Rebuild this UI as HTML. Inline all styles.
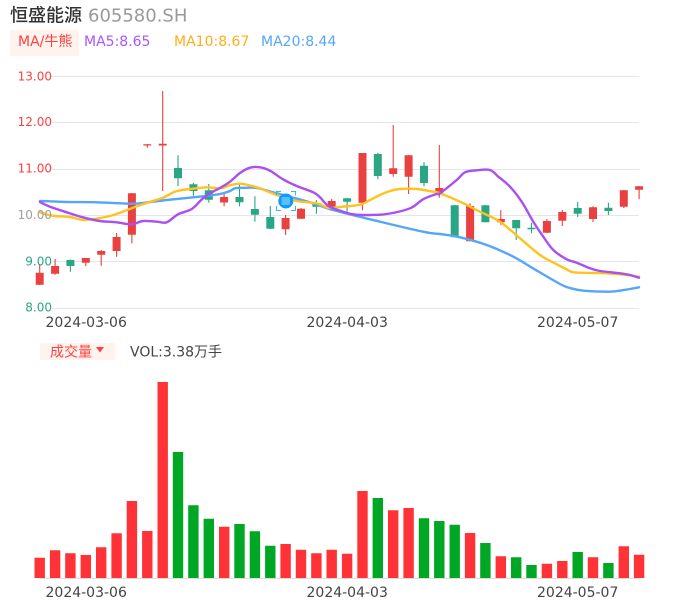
<!DOCTYPE html>
<html>
<head>
<meta charset="utf-8">
<style>
html,body{margin:0;padding:0;background:#fff;width:686px;height:606px;overflow:hidden}
svg{display:block}
text{font-family:"DejaVu Sans","Noto Sans CJK SC",sans-serif}
</style>
</head>
<body>
<svg width="686" height="606" viewBox="0 0 686 606" xmlns="http://www.w3.org/2000/svg">
<rect width="686" height="606" fill="#fff"/>
<text x="10" y="21.500" font-size="18" fill="#333" font-weight="500">恒盛能源</text>
<text x="88" y="21.500" font-size="18" fill="#999">605580.SH</text>
<rect x="10" y="30" width="69" height="26" fill="#FFF3EE"/>
<text x="18" y="46" font-size="14" fill="#FF4040">MA/牛熊</text>
<text x="84" y="46" font-size="14" fill="#AA55FF">MA5:8.65</text>
<text x="174" y="46" font-size="14" fill="#FFAE1A">MA10:8.67</text>
<text x="261" y="46" font-size="14" fill="#55A8F5">MA20:8.44</text>

<path d="M52 76.500H639M52 122.500H639M52 169.500H639M52 215.500H639M52 261.500H639M52 308.500H639" stroke="#E2E5F1" stroke-width="1" fill="none"/>

<path stroke="#E94040" stroke-width="1.100" fill="none" d="M39.700 264V285M55.100 259V274.700M85.800 258V266M101.200 250V265.700M116.600 233V256.700M131.900 193V243.300M147.300 144V147.700M162.700 91V191M224.100 194V206.300M285.600 215V235M301 208V219M331.700 199V209M362.500 153V210.300M393.200 125V176.700M408.600 155V194M439.300 145V197.700M470.100 203.300V241.300M500.800 210V224.700M546.900 219V233M562.300 210V226M593 206.300V222M623.800 190V208M639.100 186V199.300"/>
<path stroke="#2BA685" stroke-width="1.100" fill="none" d="M70.400 259.500V271.700M178 155.300V186M193.400 182.700V195.700M208.800 184V202.700M239.500 183V206.300M254.900 196.300V221.700M270.300 206V229M316.400 200V213.700M347.100 198V211.700M377.800 153V179.300M424 162V186.300M454.700 205V237.300M485.400 205V222.300M516.200 220V240M531.500 222.700V233.300M577.700 202V217M608.400 202.700V215"/>
<path fill="#EB4040" d="M35.700 272.700h8v12h-8zM51.100 266h8v7.700h-8zM81.800 258h8v4.700h-8zM97.200 251h8v3.700h-8zM112.600 237h8v14h-8zM127.900 193.300h8v41.400h-8zM143.300 144.300h8v1.200h-8zM158.700 143.800h8v1.700h-8zM220.100 197h8v5.500h-8zM281.600 218h8v11.300h-8zM297 208.700h8v10h-8zM327.700 201h8v6.700h-8zM358.500 153h8v49.700h-8zM389.200 168.300h8v5.700h-8zM404.600 155.300h8v21.400h-8zM435.300 188h8v5.700h-8zM466.100 206h8v35.300h-8zM496.800 219h8v3.300h-8zM542.900 221h8v11.700h-8zM558.300 212h8v8.700h-8zM589 207.300h8v11.700h-8zM619.800 190.300h8v16.400h-8zM635.100 186.300h8v3.400h-8z"/>
<path fill="#2BA685" d="M66.400 260h8v6h-8zM174 168h8v10.300h-8zM189.400 184.300h8v6.700h-8zM204.800 190.300h8v9.400h-8zM235.500 197h8v5.300h-8zM250.900 209h8v5.700h-8zM266.300 217h8v11.700h-8zM312.400 203.300h8v3.400h-8zM343.100 198.300h8v3.400h-8zM373.800 154h8v22h-8zM420 165.700h8v17.300h-8zM450.700 205.300h8v32h-8zM481.400 205.300h8v17h-8zM512.200 220h8v8.300h-8zM527.500 227.700h8v1.600h-8zM573.700 208h8v5.700h-8zM604.400 207.700h8v3.300h-8z"/>

<polyline class="ma" fill="none" stroke="#55A6F7" stroke-width="2.400" stroke-linejoin="round" stroke-linecap="round" points="40,201 50,201.300 66.700,202 96.700,202.300 133,203.700 150,202 166.700,200 203,196.300 220,194 230,191 235,188.300 245,187.800 256.700,188 276.700,193.300 310,202.300 333,210 370,219.300 423,231.700 440,234 460,237.300 486.700,245 513.300,256.700 533,268.300 560,284 570,288 583.300,290.700 610,291.700 625,289.800 639,287.300"/>
<polyline class="ma" fill="none" stroke="#FFC31F" stroke-width="2.400" stroke-linejoin="round" stroke-linecap="round" points="40,212.300 47,214.500 55,216 70,217 78,219 85,220 97,218.500 110,216 122,212 133,207.700 148,202.500 163,197.700 170,194 177,191 190,189 207,187.300 220,188.300 230,185.300 240,183.700 250,185.500 260,188.300 276.700,195 296.700,201 316.700,203.300 328.300,207.700 343,206.700 360,204.700 370,200 380,195 390,191 400,189 416.700,189 433,191.700 440,193.300 460,201.700 480,211.700 500,221.700 520,238.300 540,255 553,262.300 566,269 573.300,272.300 590,272.900 606.700,273.300 625,274.800 639,276.700"/>
<polyline class="ma" fill="none" stroke="#AA4FF0" stroke-width="2.400" stroke-linejoin="round" stroke-linecap="round" points="40,202 50,206.700 66.700,212.300 83,217.300 100,221 116.700,222.300 131.700,224.300 143,221 156.700,221.700 166.700,222.300 178,214.300 191.700,209 203,198.300 213,191.700 220,188 230,181.700 240,173 250,167.700 260,167.300 270,170.700 283,179.300 296.700,186 313.300,192.300 320,197.300 328,205.700 340,210.700 353,214.300 370,215 386.700,214 410,208.300 423,199.300 436.700,194 440,193.300 456.700,180 465,172.300 476.700,170.300 490,170 498.300,176.700 510,186.700 521.700,201.700 533.300,221.700 543.300,236.700 553.300,250 566.700,259.300 576.700,262.700 590,268.300 600,271 620,273.300 630,275 639,277.700"/>

<circle cx="285.800" cy="201" r="7.500" fill="#0A9BFF"/>
<rect x="281.500" y="197" width="8.500" height="8" rx="1.500" fill="#5CBDFF"/>
<path d="M276.500 195.500V191.500H281M291 191.500H295.500V195.500M276.500 206V210.500H281M291 210.500H295.500V206" fill="none" stroke="#3DB2FF" stroke-width="1"/>

<g font-size="12" text-anchor="end">
<text x="52" y="80.500" fill="#FF4040">13.00</text>
<text x="52" y="126" fill="#FF4040">12.00</text>
<text x="52" y="172.500" fill="#FF4040">11.00</text>
<text x="52" y="219" fill="#A0A0A0">10.00</text>
<text x="52" y="265.500" fill="#2BA685">9.00</text>
<text x="52" y="311.500" fill="#2BA685">8.00</text>
</g>
<g font-size="14" fill="#444">
<text x="45.500" y="327">2024-03-06</text>
<text x="306.500" y="327">2024-04-03</text>
<text x="537" y="327">2024-05-07</text>
<text x="45.500" y="597">2024-03-06</text>
<text x="306.500" y="597">2024-04-03</text>
<text x="537" y="597">2024-05-07</text>
</g>

<rect x="40" y="343" width="75" height="17" fill="#FFF3EE"/>
<text x="50" y="356.500" font-size="14" fill="#FF4040">成交量</text>
<path d="M96 347H104L100 352.500z" fill="#FF4040"/>
<text x="130" y="356.500" font-size="14" fill="#444">VOL:3.38万手</text>

<path d="M40 578.500H640" stroke="#DDD" stroke-width="1"/>
<path fill="#FF3237" d="M34.500 557.700h10.400V578h-10.400zM49.900 550.300h10.400V578h-10.400zM65.200 553.300h10.400V578h-10.400zM80.600 555h10.400V578h-10.400zM96 547.300h10.400V578h-10.400zM111.400 533.300h10.400V578h-10.400zM126.700 501h10.400V578h-10.400zM142.100 531h10.400V578h-10.400zM157.500 382h10.400V578h-10.400zM219 526.700h10.400V578h-10.400zM280.400 544h10.400V578h-10.400zM295.800 549.700h10.400V578h-10.400zM311.200 553.300h10.400V578h-10.400zM326.500 549.700h10.400V578h-10.400zM341.900 553.700h10.400V578h-10.400zM357.300 491h10.400V578h-10.400zM388 510.300h10.400V578h-10.400zM403.400 508h10.400V578h-10.400zM464.900 533h10.400V578h-10.400zM495.600 556.300h10.400V578h-10.400zM541.700 563.700h10.400V578h-10.400zM557.100 561h10.400V578h-10.400zM587.800 557.300h10.400V578h-10.400zM618.600 546.300h10.400V578h-10.400zM633.900 554.700h10.400V578h-10.400z"/>
<path fill="#00A725" d="M172.800 452h10.400V578h-10.400zM188.200 505.300h10.400V578h-10.400zM203.600 518.700h10.400V578h-10.400zM234.300 524h10.400V578h-10.400zM249.700 531.300h10.400V578h-10.400zM265.100 545.700h10.400V578h-10.400zM372.600 498h10.400V578h-10.400zM418.800 518.300h10.400V578h-10.400zM434.100 521h10.400V578h-10.400zM449.500 524.700h10.400V578h-10.400zM480.200 543h10.400V578h-10.400zM511 557.300h10.400V578h-10.400zM526.300 565h10.400V578h-10.400zM572.500 552h10.400V578h-10.400zM603.200 563h10.400V578h-10.400z"/>
</svg>
<script>
document.querySelectorAll('polyline.ma').forEach(function(l){
  var p=l.getAttribute('points').trim().split(/\s+/).map(function(s){return s.split(',').map(Number)});
  var d='M'+p[0][0]+' '+p[0][1];
  for(var i=0;i<p.length-1;i++){
    var a=p[i>0?i-1:0],b=p[i],c=p[i+1],e=p[i+2<p.length?i+2:i+1];
    d+='C'+(b[0]+(c[0]-a[0])/6).toFixed(1)+' '+(b[1]+(c[1]-a[1])/6).toFixed(1)+' '+(c[0]-(e[0]-b[0])/6).toFixed(1)+' '+(c[1]-(e[1]-b[1])/6).toFixed(1)+' '+c[0]+' '+c[1];
  }
  var n=document.createElementNS('http://www.w3.org/2000/svg','path');
  ['fill','stroke','stroke-width','stroke-linejoin','stroke-linecap'].forEach(function(k){n.setAttribute(k,l.getAttribute(k))});
  n.setAttribute('d',d);
  l.parentNode.replaceChild(n,l);
});
</script>
</body>
</html>
